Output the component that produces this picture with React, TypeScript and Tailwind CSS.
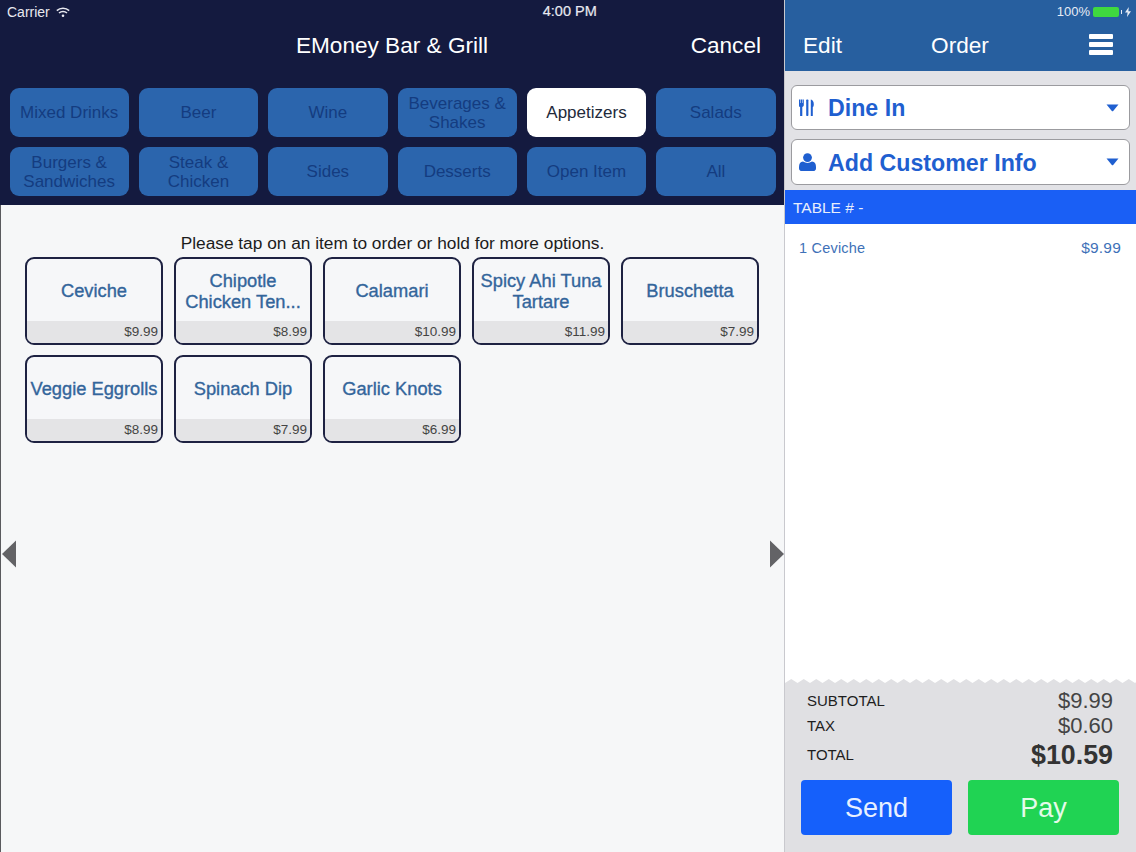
import React from "react";

const cats = [
  ["Mixed Drinks"], ["Beer"], ["Wine"], ["Beverages &", "Shakes"], ["Appetizers"], ["Salads"],
  ["Burgers &", "Sandwiches"], ["Steak &", "Chicken"], ["Sides"], ["Desserts"], ["Open Item"], ["All"],
];

const items = [
  [["Ceviche"], "$9.99"],
  [["Chipotle", "Chicken Ten..."], "$8.99"],
  [["Calamari"], "$10.99"],
  [["Spicy Ahi Tuna", "Tartare"], "$11.99"],
  [["Bruschetta"], "$7.99"],
  [["Veggie Eggrolls"], "$8.99"],
  [["Spinach Dip"], "$7.99"],
  [["Garlic Knots"], "$6.99"],
] as [string[], string][];

function Caret() {
  return (
    <svg width="13" height="8" viewBox="0 0 13 8" className="shrink-0">
      <path d="M0.5 0.5 H12.5 L7.2 7 Q6.5 7.6 5.8 7 Z" fill="#1f5fd0" />
    </svg>
  );
}

function Wifi() {
  return (
    <svg width="14" height="11" viewBox="0 0 14 11" fill="none" stroke="#e8e9f0" strokeWidth="1.5">
      <path d="M0.8 3.6 C4.2 0.4 9.8 0.4 13.2 3.6" />
      <path d="M3 6 C5.2 4 8.8 4 11 6" />
      <circle cx="7" cy="8.8" r="1.3" fill="#e8e9f0" stroke="none" />
    </svg>
  );
}

function Cutlery() {
  return (
    <svg width="16" height="17" viewBox="0 0 16 17" fill="#1f5fd0">
      <path d="M0 0.5 h1.2 v3.6 h0.5 v-3.6 h1.3 v3.6 h0.5 v-3.6 h1.3 v5.8 q0 1.2 -1.5 1.6 v9 h-2.2 v-9 q-1.4 -0.4 -1.4 -1.6 Z" />
      <rect x="7.2" y="0.5" width="2.2" height="16.5" rx="0.7" />
      <path d="M11.8 0.5 q3 0.8 3 5 q0 2.2 -1 2.8 v8.7 h-2 Z" />
    </svg>
  );
}

function Person() {
  return (
    <svg width="17" height="18" viewBox="0 0 17 18" fill="#1f5fd0">
      <circle cx="8.5" cy="4.6" r="4.4" />
      <path d="M0 14 Q0 9 4 8.6 Q8.5 11.4 13 8.6 Q17 9 17 14 V15.2 Q17 18 14 18 H3 Q0 18 0 15.2 Z" />
    </svg>
  );
}

function Zigzag() {
  const pts: string[] = ["0,9", "0,4"];
  for (let x = 0; x <= 352; x += 12.5) {
    pts.push(`${x + 6.25},0`, `${x + 12.5},4`);
  }
  pts.push("352,9");
  return (
    <svg width="352" height="9" viewBox="0 0 352 9" className="block">
      <polygon points={pts.join(" ")} fill="#e0e0e3" />
    </svg>
  );
}

export default function App() {
  return (
    <div className="relative flex h-[852px] w-[1136px] overflow-hidden bg-white font-['Liberation_Sans',Arial,sans-serif]">
      <div className="flex w-[784px] shrink-0 flex-col bg-[#f6f7f8]">
        <div className="h-[205px] shrink-0 bg-[#141a3f] text-white">
          <div className="flex h-[24px] items-center pl-[7px] text-[14px] text-[#e8e9f0]">
            <span>Carrier</span>
            <span className="ml-[6px]"><Wifi /></span>
            <span className="ml-[473px] text-[14.5px] [-webkit-text-stroke:0.2px_#e8e9f0]">4:00 PM</span>
          </div>
          <div className="grid h-[44px] grid-cols-3 items-center text-center text-[22.6px] leading-none">
            <span />
            <span className="whitespace-nowrap">EMoney Bar &amp; Grill</span>
            <span className="pr-[23px] text-right">Cancel</span>
          </div>
          <div className="mt-[20px] grid grid-cols-6 gap-x-[10px] gap-y-[10px] pl-[9.5px] pr-[8.5px]">
            {cats.map((c, i) => {
              const active = c[0] === "Appetizers";
              return (
                <div
                  key={i}
                  className={
                    active
                      ? "flex h-[49px] flex-col items-center justify-center rounded-[9px] bg-white text-[17px] leading-[19px] text-[#222a3a]"
                      : "flex h-[49px] flex-col items-center justify-center rounded-[9px] bg-[#2b65ad] text-[17px] leading-[19px] text-[#143c80]"
                  }
                >
                  {c.map((l) => (
                    <span key={l} className="whitespace-nowrap">{l}</span>
                  ))}
                </div>
              );
            })}
          </div>
        </div>
        <div className="relative flex-1 border-l border-l-[#5a5a5e]">
          <p className="mt-[26px] h-[26px] text-center text-[17.3px] leading-[24px] text-[#1c1c1c]">
            Please tap on an item to order or hold for more options.
          </p>
          <div className="grid grid-cols-[repeat(5,138px)] gap-x-[11px] gap-y-[10px] pl-[24px]">
            {items.map(([name, price]) => (
              <div
                key={name[0]}
                className="flex h-[88px] flex-col overflow-hidden rounded-[9px] border-2 border-[#1e2242] bg-[#f6f7f9]"
              >
                <div className="flex flex-1 flex-col items-center justify-center whitespace-nowrap pt-[1px] text-[18.3px] leading-[21px] text-[#33659b] [-webkit-text-stroke:0.35px_#33659b]">
                  {name.map((l) => (
                    <span key={l}>{l}</span>
                  ))}
                </div>
                <div className="flex h-[22px] items-center justify-end bg-[#e4e4e6] pr-[3px] pt-[1px] text-[13.5px] text-[#444]">
                  {price}
                </div>
              </div>
            ))}
          </div>
          <svg width="16" height="28" viewBox="0 0 16 28" className="absolute left-[0px] top-[335px]">
            <path d="M15 0.5 V27.5 L1 14 Z" fill="#636366" />
          </svg>
          <svg width="16" height="28" viewBox="0 0 16 28" className="absolute left-[768px] top-[335px]">
            <path d="M1 0.5 V27.5 L15 14 Z" fill="#636366" />
          </svg>
        </div>
      </div>

      <div className="flex w-[352px] shrink-0 flex-col border-l border-l-[#c9c9ce] bg-white">
        <div className="h-[71px] shrink-0 bg-[#275f9f] text-white">
          <div className="flex h-[24px] items-center justify-end gap-[2px] pr-[5px] text-[13px] text-[#e6ecf5]">
            <span>100%</span>
            <span className="relative ml-[1px] flex h-[10px] w-[26px] rounded-[2px] bg-[#3fd83f]" />
            <span className="mr-[1px] h-[4px] w-[1px] bg-[#e6ecf5]" />
            <svg width="6" height="10" viewBox="0 0 6 10"><path d="M3.8 0 L0 5.6 H2.6 L2 10 L6 4.2 H3.4 Z" fill="#e6ecf5" /></svg>
          </div>
          <div className="flex h-[44px] items-center justify-between pl-[18px] pr-[23px] text-[22.6px] leading-none">
            <span className="w-[60px]">Edit</span>
            <span className="ml-[-32px]">Order</span>
            <span className="mt-[-3px] flex w-[24px] flex-col gap-[3px]">
              <span className="h-[5px] rounded-[1px] bg-white" />
              <span className="h-[5px] rounded-[1px] bg-white" />
              <span className="h-[5px] rounded-[1px] bg-white" />
            </span>
          </div>
        </div>

        <div className="flex h-[119px] shrink-0 flex-col bg-[#e2e2e6] px-[6px] pt-[14px]">
          <div className="flex h-[45px] items-center rounded-[6px] border border-[#9b9b9f] bg-white pl-[7px] pr-[10px] text-[23.2px] font-bold text-[#1f5fd0]">
            <span className="flex w-[28px] shrink-0"><Cutlery /></span>
            <span className="ml-[1px] flex-1 pt-[1px]">Dine In</span>
            <Caret />
          </div>
          <div className="mt-[9px] flex h-[46px] items-center rounded-[6px] border border-[#9b9b9f] bg-white pl-[7px] pr-[10px] text-[23.2px] font-bold text-[#1f5fd0]">
            <span className="flex w-[28px] shrink-0"><Person /></span>
            <span className="ml-[1px] flex-1 pt-[2px]">Add Customer Info</span>
            <Caret />
          </div>
        </div>

        <div className="flex h-[34px] shrink-0 items-center bg-[#1a5ff5] pl-[8px] pt-[2px] text-[15.5px] text-[#e8eefc]">
          TABLE # -
        </div>

        <div className="flex-1 pl-[14px] pr-[15px] pt-[14px]">
          <div className="flex justify-between text-[14.5px] leading-[20px] tracking-[0.2px] text-[#3e71b8]">
            <span>1 Ceviche</span>
            <span className="text-[15.5px]">$9.99</span>
          </div>
        </div>

        <Zigzag />
        <div className="flex h-[164px] shrink-0 flex-col bg-[#e0e0e3] px-[16px]">
          <div className="flex h-[25px] items-center justify-between pl-[6px] pr-[7px] text-[#1e1e1e]">
            <span className="pt-[2px] text-[15px]">SUBTOTAL</span>
            <span className="text-[22px] text-[#444]">$9.99</span>
          </div>
          <div className="flex h-[25px] items-center justify-between pl-[6px] pr-[7px] text-[#1e1e1e]">
            <span className="pt-[2px] text-[15px]">TAX</span>
            <span className="text-[22px] text-[#444]">$0.60</span>
          </div>
          <div className="mt-[1px] flex h-[32px] items-center justify-between pl-[6px] pr-[7px] text-[#1e1e1e]">
            <span className="text-[15px]">TOTAL</span>
            <span className="text-[26.8px] font-bold text-[#333]">$10.59</span>
          </div>
          <div className="mt-[9px] flex justify-between pr-[1px]">
            <div className="flex h-[55px] w-[151px] items-center justify-center rounded-[4px] bg-[#1560fb] pt-[1px] text-[27px] text-[#e8f0ff]">Send</div>
            <div className="flex h-[55px] w-[151px] items-center justify-center rounded-[4px] bg-[#20d353] pt-[1px] text-[27px] text-[#e4fbe9]">Pay</div>
          </div>
        </div>
      </div>
    </div>
  );
}
